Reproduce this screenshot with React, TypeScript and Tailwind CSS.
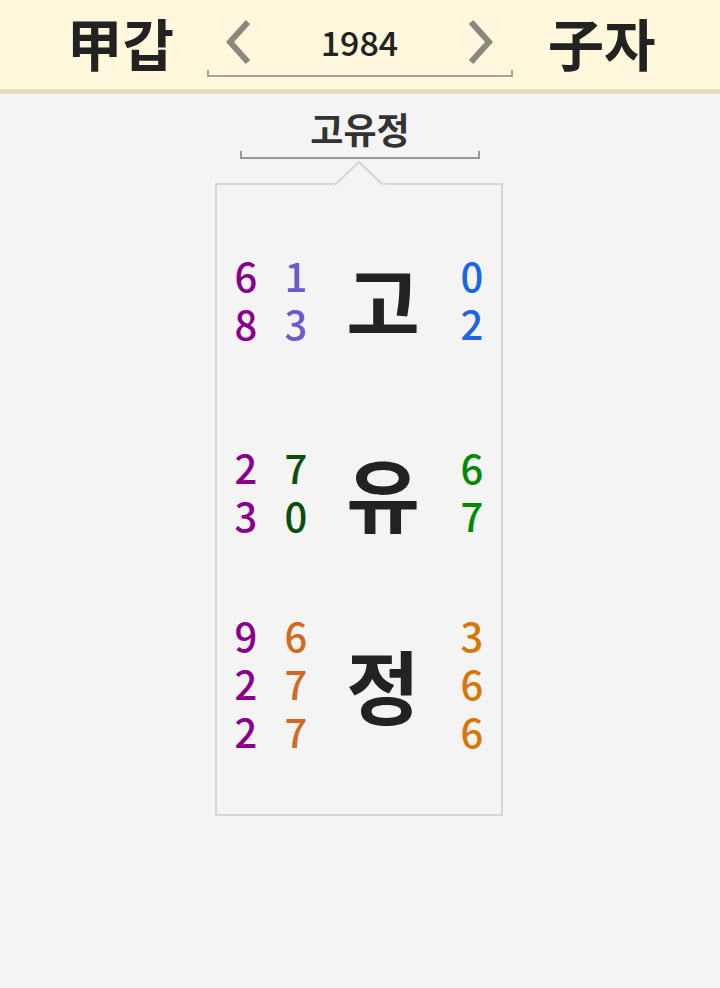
import React from "react";

const KR = { fontFamily: '"Noto Sans CJK KR", "Noto Sans", sans-serif' };

type Row = { hangul: string; a: string[]; b: string[]; c: string[]; ca: string; cb: string; cc: string };

const rows: Row[] = [
  { hangul: "고", a: ["6", "8"], b: ["1", "3"], c: ["0", "2"], ca: "text-[#8b008b]", cb: "text-[#6a5acd]", cc: "text-[#1a66e6]" },
  { hangul: "유", a: ["2", "3"], b: ["7", "0"], c: ["6", "7"], ca: "text-[#8b008b]", cb: "text-[#0b4d0b]", cc: "text-[#008a00]" },
  { hangul: "정", a: ["9", "2", "2"], b: ["6", "7", "7"], c: ["3", "6", "6"], ca: "text-[#8b008b]", cb: "text-[#d2691e]", cc: "text-[#d97706]" },
];

function Chevron({ dir }: { dir: "l" | "r" }) {
  return (
    <svg width="28" height="46" viewBox="0 0 28 46" className="block">
      {dir === "l" ? (
        <polyline points="23,3 5,23 23,43" fill="none" stroke="#8a897e" strokeWidth="6" strokeLinejoin="miter" />
      ) : (
        <polyline points="5,3 23,23 5,43" fill="none" stroke="#8a897e" strokeWidth="6" strokeLinejoin="miter" />
      )}
    </svg>
  );
}

function Col({ items, color, w }: { items: string[]; color: string; w: string }) {
  return (
    <div className={`flex flex-col items-center ${w} ${color} text-[40px] font-medium`}>
      {items.map((d, i) => (
        <span key={i} className="h-[48px] flex items-center leading-none">
          {d}
        </span>
      ))}
    </div>
  );
}

export default function App() {
  return (
    <div className="min-h-[988px] w-full bg-[#f4f4f4]" style={KR}>
      <div className="h-[89px] bg-[#fff8dc] flex items-center justify-center">
        <div className="w-[138px] flex justify-end pr-[33px] text-[56px] font-bold text-[#222] leading-none pb-[6px]">
          <span className="whitespace-nowrap">甲갑</span>
        </div>
        <div className="relative w-[306px] h-[89px] flex items-center">
          <div className="absolute left-0 right-0 top-[70px] h-[7px] border-l-2 border-r-2 border-b-2 border-[#a8a48e]" />
          <div className="flex w-full items-center pb-[6px]">
            <div className="ml-[18px]">
              <Chevron dir="l" />
            </div>
            <div className="flex-1 text-center text-[34px] font-medium leading-none text-[#222]">1984</div>
            <div className="mr-[19px]">
              <Chevron dir="r" />
            </div>
          </div>
        </div>
        <div className="w-[138px] pl-[35px] text-[56px] font-bold text-[#222] leading-none pb-[6px]">
          <span className="whitespace-nowrap">子자</span>
        </div>
      </div>
      <div className="h-[5px] bg-[#e3dcc0]" />
      <div className="flex flex-col items-center">
        <div className="mt-[11px] text-[36px] font-bold text-[#333] leading-[46px]">고유정</div>
        <div className="w-[240px] h-[8px] border-l-2 border-r-2 border-b-2 border-[#999]" />
        <div className="relative mt-[24px] ml-[-2px] w-[288px] border-2 border-[#d6d6d6] pt-[18px] pb-[35px]">
          <svg className="absolute left-[116px] top-[-25px]" width="52" height="27" viewBox="0 0 52 27">
            <polygon points="2,25 26,2 50,25" fill="#f4f4f4" />
            <rect x="0" y="24" width="52" height="3" fill="#f4f4f4" />
            <polyline points="2,25 26,2 50,25" fill="none" stroke="#d6d6d6" strokeWidth="2" />
          </svg>
          {rows.map((r, i) => (
            <div key={i} className="h-[192px] flex items-center pl-[9px]">
              <Col items={r.a} color={r.ca} w="w-[40px]" />
              <div className="w-[10px]" />
              <Col items={r.b} color={r.cb} w="w-[40px]" />
              <div className="w-[134px] flex justify-center text-[80px] font-bold text-[#222] leading-none">{r.hangul}</div>
              <Col items={r.c} color={r.cc} w="w-[44px]" />
            </div>
          ))}
        </div>
      </div>
    </div>
  );
}
